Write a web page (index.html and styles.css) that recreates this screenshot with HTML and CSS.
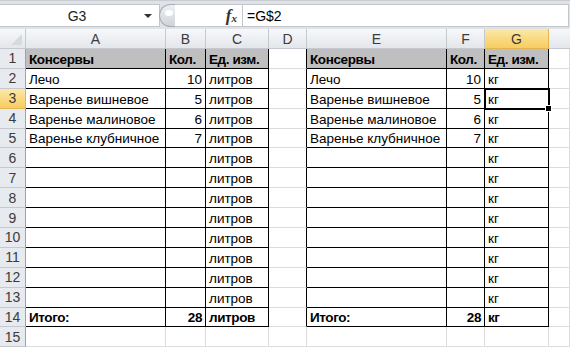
FILE: index.html
```html
<!DOCTYPE html>
<html lang="ru">
<head>
  <meta charset="UTF-8">
  <title>Консервы</title>
  <link rel="stylesheet" href="styles.css">
</head>
<body>
  <div class="fbar">
    <div class="namebox">
      <span class="ref">G3</span>
      <span class="drop"></span>
    </div>
    <div class="grip"><span></span></div>
    <div class="fx"><i>f</i><i class="x">x</i></div>
    <div class="formula">=G$2</div>
  </div>

  <div class="sheet">
    <!-- column headers -->
    <div class="corner"></div>
    <div class="ch">A</div>
    <div class="ch">B</div>
    <div class="ch">C</div>
    <div class="ch">D</div>
    <div class="ch">E</div>
    <div class="ch">F</div>
    <div class="ch sel">G</div>
    <div class="ch last"></div>

    <!-- 1 -->
    <div class="rh">1</div>
    <div class="c k hd">Консервы</div>
    <div class="c k hd">Кол.</div>
    <div class="c k hd">Ед. изм.</div>
    <div class="c kr"></div>
    <div class="c k hd">Консервы</div>
    <div class="c k hd">Кол.</div>
    <div class="c k hd">Ед. изм.</div>
    <div class="c"></div>

    <!-- 2 -->
    <div class="rh">2</div>
    <div class="c k">Лечо</div>
    <div class="c k num">10</div>
    <div class="c k">литров</div>
    <div class="c kr"></div>
    <div class="c k">Лечо</div>
    <div class="c k num">10</div>
    <div class="c k">кг</div>
    <div class="c"></div>

    <!-- 3 -->
    <div class="rh sel">3</div>
    <div class="c k">Варенье вишневое</div>
    <div class="c k num">5</div>
    <div class="c k">литров</div>
    <div class="c kr"></div>
    <div class="c k">Варенье вишневое</div>
    <div class="c k num">5</div>
    <div class="c k active">кг</div>
    <div class="c"></div>

    <!-- 4 -->
    <div class="rh">4</div>
    <div class="c k">Варенье малиновое</div>
    <div class="c k num">6</div>
    <div class="c k">литров</div>
    <div class="c kr"></div>
    <div class="c k">Варенье малиновое</div>
    <div class="c k num">6</div>
    <div class="c k">кг</div>
    <div class="c"></div>

    <!-- 5 -->
    <div class="rh">5</div>
    <div class="c k">Варенье клубничное</div>
    <div class="c k num">7</div>
    <div class="c k">литров</div>
    <div class="c kr"></div>
    <div class="c k">Варенье клубничное</div>
    <div class="c k num">7</div>
    <div class="c k">кг</div>
    <div class="c"></div>

    <!-- 6 -->
    <div class="rh">6</div>
    <div class="c k"></div><div class="c k"></div><div class="c k">литров</div>
    <div class="c kr"></div>
    <div class="c k"></div><div class="c k"></div><div class="c k">кг</div>
    <div class="c"></div>

    <!-- 7 -->
    <div class="rh">7</div>
    <div class="c k"></div><div class="c k"></div><div class="c k">литров</div>
    <div class="c kr"></div>
    <div class="c k"></div><div class="c k"></div><div class="c k">кг</div>
    <div class="c"></div>

    <!-- 8 -->
    <div class="rh">8</div>
    <div class="c k"></div><div class="c k"></div><div class="c k">литров</div>
    <div class="c kr"></div>
    <div class="c k"></div><div class="c k"></div><div class="c k">кг</div>
    <div class="c"></div>

    <!-- 9 -->
    <div class="rh">9</div>
    <div class="c k"></div><div class="c k"></div><div class="c k">литров</div>
    <div class="c kr"></div>
    <div class="c k"></div><div class="c k"></div><div class="c k">кг</div>
    <div class="c"></div>

    <!-- 10 -->
    <div class="rh">10</div>
    <div class="c k"></div><div class="c k"></div><div class="c k">литров</div>
    <div class="c kr"></div>
    <div class="c k"></div><div class="c k"></div><div class="c k">кг</div>
    <div class="c"></div>

    <!-- 11 -->
    <div class="rh">11</div>
    <div class="c k"></div><div class="c k"></div><div class="c k">литров</div>
    <div class="c kr"></div>
    <div class="c k"></div><div class="c k"></div><div class="c k">кг</div>
    <div class="c"></div>

    <!-- 12 -->
    <div class="rh">12</div>
    <div class="c k"></div><div class="c k"></div><div class="c k">литров</div>
    <div class="c kr"></div>
    <div class="c k"></div><div class="c k"></div><div class="c k">кг</div>
    <div class="c"></div>

    <!-- 13 -->
    <div class="rh">13</div>
    <div class="c k"></div><div class="c k"></div><div class="c k">литров</div>
    <div class="c kr"></div>
    <div class="c k"></div><div class="c k"></div><div class="c k">кг</div>
    <div class="c"></div>

    <!-- 14 -->
    <div class="rh">14</div>
    <div class="c k b">Итого:</div>
    <div class="c k b num">28</div>
    <div class="c k b">литров</div>
    <div class="c kr"></div>
    <div class="c k b">Итого:</div>
    <div class="c k b num">28</div>
    <div class="c k b">кг</div>
    <div class="c"></div>

    <!-- 15 -->
    <div class="rh">15</div>
    <div class="c"></div><div class="c"></div><div class="c"></div>
    <div class="c"></div>
    <div class="c"></div><div class="c"></div><div class="c"></div>
    <div class="c"></div>
  </div>
</body>
</html>
```

FILE: styles.css
```css
* {
  box-sizing: border-box;
}

body {
  margin: 0;
  width: 570px;
  height: 348px;
  overflow: hidden;
  background: #fff;
  font-family: "Liberation Sans", Arial, sans-serif;
  font-size: 13.5px;
  color: #000;
}

/* formula bar */

.fbar {
  display: flex;
  height: 29px;
  padding: 3px 1px 2px 0;
  background: #dfe3e8;
  border-top: 1px solid #c9cdd2;
}

.namebox {
  width: 160px;
  display: flex;
  align-items: center;
  background: #fff;
  border: 1px solid #c3c7cc;
  border-left: 0;
}

.namebox .ref {
  flex: 1;
  text-align: center;
  font-size: 14px;
  color: #222;
  padding-left: 10px;
}

.namebox .drop {
  width: 0;
  height: 0;
  margin-right: 7px;
  border-left: 4px solid transparent;
  border-right: 4px solid transparent;
  border-top: 4px solid #333;
}

.grip {
  width: 16px;
  margin-left: -1px;
  border: 1px solid #a7adb4;
  border-right: 0;
  border-radius: 12px 0 0 12px;
  background: linear-gradient(#eef0f3, #cfd4da);
  position: relative;
}

.grip span {
  position: absolute;
  left: 5px;
  top: 5px;
  width: 8px;
  height: 6px;
  border-radius: 50%;
  background: #fff;
}

.fx {
  width: 68px;
  display: flex;
  align-items: center;
  justify-content: flex-end;
  padding-right: 5px;
  background: #fff;
  border-top: 1px solid #c3c7cc;
  border-bottom: 1px solid #c3c7cc;
  border-right: 1px solid #c3c7cc;
  font-family: "Liberation Serif", serif;
  font-weight: bold;
  color: #333;
}

.fx i {
  font-size: 17px;
}

.fx .x {
  font-size: 11px;
  margin-top: 5px;
}

.formula {
  flex: 1;
  display: flex;
  align-items: center;
  padding-left: 4px;
  background: #fff;
  border: 1px solid #c3c7cc;
  border-left: 0;
  font-size: 14px;
}

/* sheet grid */

.sheet {
  display: grid;
  grid-template-columns: 26px 140px 40px 63px 38px 140px 38px 64px 1fr;
  grid-template-rows: 20px;
  grid-auto-rows: 19.9px;
}

.corner,
.ch,
.rh {
  background: linear-gradient(#f7f8fa, #e3e6ea);
  border-right: 1px solid #c5c9cf;
  border-bottom: 1px solid #c5c9cf;
  color: #3b3b3b;
  font-size: 14px;
  display: flex;
  align-items: center;
  justify-content: center;
}

.corner {
  position: relative;
}

.corner::after {
  content: "";
  position: absolute;
  right: 3px;
  bottom: 3px;
  border-left: 11px solid transparent;
  border-bottom: 11px solid #d6d9dd;
}

.rh {
  background: #e7eaee;
  border-right-color: #9ea3a9;
}

.ch.sel,
.rh.sel {
  background: linear-gradient(#fce8a8, #f7cd5f);
  border-right-color: #e2b452;
  border-bottom-color: #e2b452;
}

.ch.last {
  border-right: 0;
}

.c {
  display: flex;
  align-items: flex-end;
  padding: 0 3px 1px;
  white-space: nowrap;
  overflow: hidden;
  border-right: 1px solid #dadcdd;
  border-bottom: 1px solid #dadcdd;
}

.c.k {
  border-color: #000;
}

.c.kr {
  border-right-color: #000;
}

.hd {
  background: #bfbfbf;
  font-weight: bold;
  letter-spacing: -0.4px;
}

.b {
  font-weight: bold;
  letter-spacing: -0.4px;
}

.num {
  justify-content: flex-end;
}

.active {
  position: relative;
  overflow: visible;
  outline: 2px solid #000;
  outline-offset: -1px;
}

.active::after {
  content: "";
  position: absolute;
  right: -4px;
  bottom: -4px;
  width: 5px;
  height: 5px;
  background: #000;
  border: 1px solid #fff;
}
```
